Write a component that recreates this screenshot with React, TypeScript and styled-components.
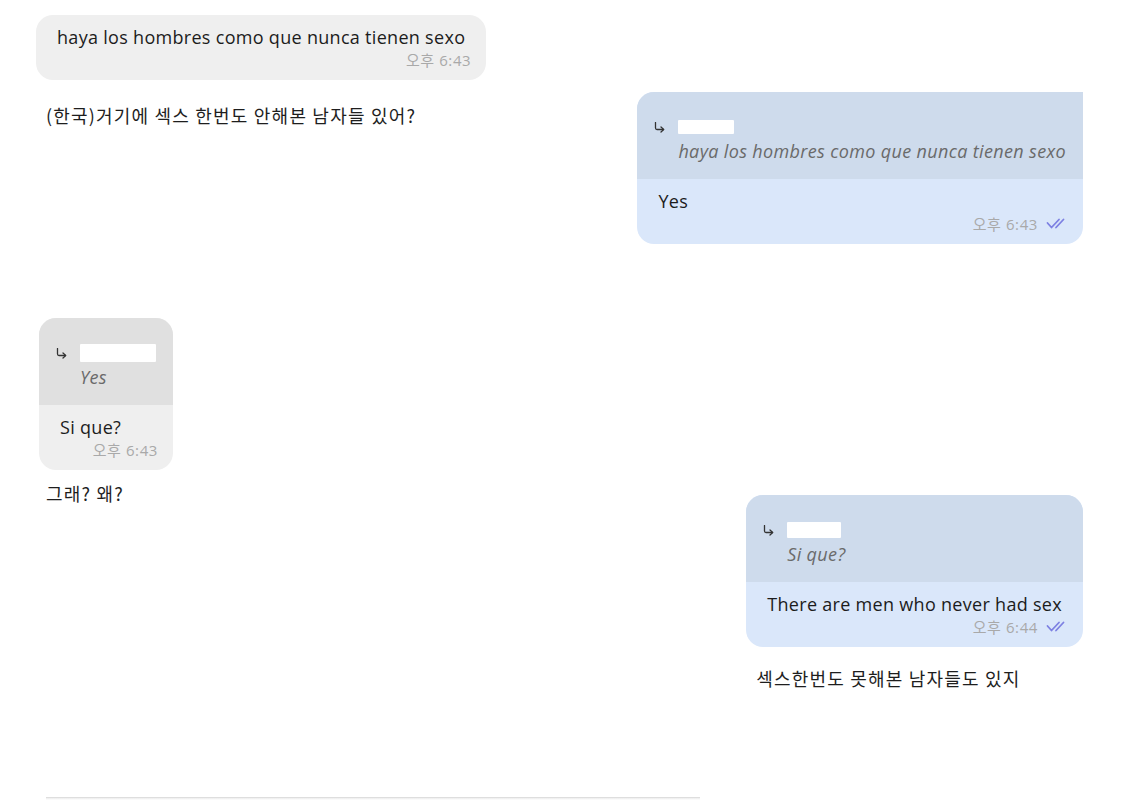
import React from "react";
import styled, { createGlobalStyle, css } from "styled-components";

const Global = createGlobalStyle`
  html, body { margin: 0; padding: 0; background: #ffffff; }
  body { width: 1125px; height: 800px; overflow: hidden; font-family: "Open Sans", "Noto Sans CJK KR", sans-serif; }
`;

const Page = styled.div`
  display: flex;
  flex-direction: column;
  height: 800px;
`;

const Thread = styled.div`
  display: grid;
  grid-template-columns: 1fr auto;
  grid-template-areas:
    "b1 ."
    "c1 b2"
    "b3 ."
    "c3 b4";
  align-items: start;
  padding: 15px 42px 0 36px;
`;

const Cell = styled.div<{ $area: string; $top?: number; $left?: number }>`
  grid-area: ${(p) => p.$area};
  margin-top: ${(p) => p.$top ?? 0}px;
  margin-left: ${(p) => p.$left ?? 0}px;
  display: flex;
  flex-direction: column;
  align-items: flex-start;
  justify-self: ${(p) => (p.$area === "b2" || p.$area === "b4" ? "end" : "start")};
`;

type Tone = "gray" | "blue";

const Bubble = styled.div<{ $tone: Tone; $squareTR?: boolean }>`
  display: flex;
  flex-direction: column;
  border-radius: 17px;
  overflow: hidden;
  background: ${(p) => (p.$tone === "blue" ? "#dae7fa" : "#efefef")};
  ${(p) =>
    p.$squareTR &&
    css`
      border-top-right-radius: 0;
    `}
`;

const Quote = styled.div<{ $tone: Tone }>`
  display: flex;
  flex-direction: column;
  padding: 26px 17px 17px 17px;
  background: ${(p) => (p.$tone === "blue" ? "#cedbec" : "#e0e0e0")};
`;

const NameRow = styled.div`
  display: flex;
  align-items: center;
  gap: 13px;
  height: 18px;
`;

const Redacted = styled.span<{ $w: number; $h: number }>`
  display: block;
  width: ${(p) => p.$w}px;
  height: ${(p) => p.$h}px;
  background: #ffffff;
  border-radius: 1px;
`;

const QuoteText = styled.div`
  margin: 4px 0 0 24px;
  font-style: italic;
  font-size: 18px;
  letter-spacing: 0.35px;
  line-height: 22px;
  color: #6a6a6a;
  white-space: nowrap;
`;

const Body = styled.div`
  display: flex;
  flex-direction: column;
  padding: 11px 15px 11px 21px;
`;

const Text = styled.div`
  font-size: 18px;
  letter-spacing: 0.3px;
  line-height: 23px;
  color: #1c1c1c;
  margin-right: 6px;
  white-space: nowrap;
`;

const Meta = styled.div`
  align-self: flex-end;
  display: flex;
  align-items: center;
  gap: 8px;
  height: 20px;
  font-size: 15px;
  letter-spacing: 0.6px;
  color: #a9a9a9;
  white-space: nowrap;
`;

const Caption = styled.div<{ $top?: number }>`
  margin: ${(p) => p.$top ?? 0}px 0 0 10px;
  font-family: "Noto Sans CJK KR", "Open Sans", sans-serif;
  font-size: 18px;
  letter-spacing: 1.2px;
  line-height: 24px;
  color: #1e1e1e;
  white-space: nowrap;
`;

const Composer = styled.div`
  margin: 107px 0 0 46px;
  width: 654px;
  height: 3px;
  border-top: 1px solid #dedede;
  background: linear-gradient(#ececec, #ffffff);
`;

const Ticks = () => (
  <svg width="22" height="11" viewBox="0 0 22 11" fill="none">
    <path d="M1.5 5 L5.5 9.5 L13 1.5" stroke="#7d80e2" strokeWidth="1.8" strokeLinecap="round" strokeLinejoin="round" />
    <path d="M10 9.5 L17.5 1.5" stroke="#7d80e2" strokeWidth="1.8" strokeLinecap="round" />
  </svg>
);

const Hook = () => (
  <svg width="11" height="11" viewBox="0 0 11 11" fill="none">
    <path d="M1.5 0.5 V6 Q1.5 7.5 3 7.5 H9.5" stroke="#333" strokeWidth="1.3" strokeLinecap="round" />
    <path d="M7 5 L9.7 7.5 L7 10" stroke="#333" strokeWidth="1.3" strokeLinecap="round" strokeLinejoin="round" />
  </svg>
);

const ReplyHead = ({ tone, w, h, text }: { tone: Tone; w: number; h: number; text: string }) => (
  <Quote $tone={tone}>
    <NameRow>
      <Hook />
      <Redacted $w={w} $h={h} />
    </NameRow>
    <QuoteText>{text}</QuoteText>
  </Quote>
);

export default function App() {
  return (
    <Page>
      <Global />
      <Thread>
        <Cell $area="b1">
          <Bubble $tone="gray">
            <Body>
              <Text>haya los hombres como que nunca tienen sexo</Text>
              <Meta>오후 6:43</Meta>
            </Body>
          </Bubble>
        </Cell>
        <Cell $area="c1" $top={23}>
          <Caption>(한국)거기에 섹스 한번도 안해본 남자들 있어?</Caption>
        </Cell>
        <Cell $area="b2" $top={12}>
          <Bubble $tone="blue" $squareTR>
            <ReplyHead tone="blue" w={56} h={14} text="haya los hombres como que nunca tienen sexo" />
            <Body>
              <Text>Yes</Text>
              <Meta>
                오후 6:43 <Ticks />
              </Meta>
            </Body>
          </Bubble>
        </Cell>
        <Cell $area="b3" $top={74} $left={3}>
          <Bubble $tone="gray">
            <ReplyHead tone="gray" w={76} h={18} text="Yes" />
            <Body>
              <Text>Si que?</Text>
              <Meta>오후 6:43</Meta>
            </Body>
          </Bubble>
        </Cell>
        <Cell $area="c3" $top={11}>
          <Caption>그래? 왜?</Caption>
        </Cell>
        <Cell $area="b4" $top={25}>
          <Bubble $tone="blue">
            <ReplyHead tone="blue" w={54} h={16} text="Si que?" />
            <Body>
              <Text>There are men who never had sex</Text>
              <Meta>
                오후 6:44 <Ticks />
              </Meta>
            </Body>
          </Bubble>
          <Caption $top={19}>섹스한번도 못해본 남자들도 있지</Caption>
        </Cell>
      </Thread>
      <Composer />
    </Page>
  );
}
